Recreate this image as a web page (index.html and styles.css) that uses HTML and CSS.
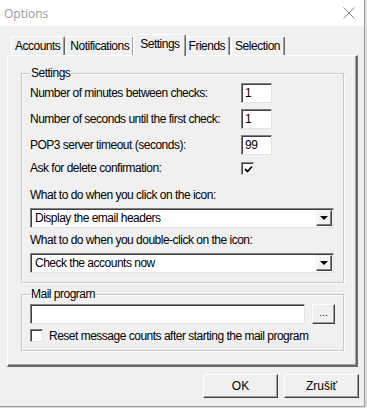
FILE: index.html
```html
<!DOCTYPE html>
<html lang="en">
<head>
    <meta charset="UTF-8">
    <title>Options</title>
    <link rel="stylesheet" href="styles.css">
</head>
<body>
    <div class="window">
        <div class="titlebar">
            <span class="title">Options</span>
            <svg class="close-x" width="12" height="12" viewBox="0 0 12 12">
                <path d="M0.5 0.5 L11.5 11.5 M11.5 0.5 L0.5 11.5" stroke="#8a8a8a" stroke-width="1" fill="none"/>
            </svg>
        </div>

        <div class="content">
            <div class="tabs">
                <div class="tab">Accounts</div>
                <div class="tab">Notifications</div>
                <div class="tab active">Settings</div>
                <div class="tab">Friends</div>
                <div class="tab">Selection</div>
            </div>

            <div class="panel">
                <fieldset class="group settings">
                    <legend>Settings</legend>
                    <div class="grid">
                        <label>Number of minutes between checks:</label>
                        <div class="field">1</div>
                        <label>Number of seconds until the first check:</label>
                        <div class="field">1</div>
                        <label>POP3 server timeout (seconds):</label>
                        <div class="field">99</div>
                        <label class="short">Ask for delete confirmation:</label>
                        <div class="check checked">
                            <svg width="9" height="9" viewBox="0 0 9 9">
                                <path d="M1 4 L3.5 6.5 L8 1.5" stroke="#000" stroke-width="1.8" fill="none"/>
                            </svg>
                        </div>
                    </div>

                    <div class="caption">What to do when you click on the icon:</div>
                    <div class="combo">
                        <span>Display the email headers</span>
                        <div class="arrow"><i></i></div>
                    </div>

                    <div class="caption">What to do when you double-click on the icon:</div>
                    <div class="combo">
                        <span>Check the accounts now</span>
                        <div class="arrow"><i></i></div>
                    </div>
                </fieldset>

                <fieldset class="group mail">
                    <legend>Mail program</legend>
                    <div class="path-row">
                        <div class="field wide"></div>
                        <button class="browse">...</button>
                    </div>
                    <div class="check-row">
                        <div class="check"></div>
                        <span>Reset message counts after starting the mail program</span>
                    </div>
                </fieldset>
            </div>

            <div class="buttons">
                <button class="btn">OK</button>
                <button class="btn">Zrušiť</button>
            </div>
        </div>
    </div>
</body>
</html>
```

FILE: styles.css
```css
body {
    margin: 0;
    padding: 0;
    background: #d9dde3;
    font-family: "Liberation Sans", Arial, sans-serif;
    font-size: 12px;
    letter-spacing: -0.5px;
    color: #000;
    white-space: nowrap;
}

.window {
    width: 364px;
    height: 406px;
    border-right: 1px solid #9a9a9a;
    border-bottom: 1px solid #9a9a9a;
    background: #f0f0f0;
    display: flex;
    flex-direction: column;
}

.titlebar {
    height: 26px;
    background: #fff;
    display: flex;
    align-items: center;
    justify-content: space-between;
    padding: 0 9px 0 4px;
    letter-spacing: 0;
}

.title {
    font-family: "Open Sans", "Liberation Sans", sans-serif;
    font-size: 12px;
    color: #999;
}

.content {
    padding: 8px 0 0 7px;
}

/* tab strip */
.tabs {
    display: flex;
    align-items: flex-end;
    padding-left: 4px;
    height: 21px;
}

.tab {
    height: 18px;
    line-height: 18px;
    padding: 0 4px 0 3px;
    border-top: 1px solid #fff;
    border-left: 1px solid #fff;
    border-right: 1px solid #696969;
    box-shadow: inset -1px 0 #a0a0a0;
    border-radius: 2px 2px 0 0;
    margin-right: 1px;
}

.tab.active {
    height: 21px;
    line-height: 18px;
    padding: 0 5px 0 6px;
    margin: 0 -1px -1px -2px;
    background: #f0f0f0;
    position: relative;
    z-index: 1;
}

.panel {
    width: 335px;
    height: 299px;
    border-top: 1px solid #fff;
    border-left: 1px solid #fff;
    border-right: 2px solid #696969;
    border-bottom: 2px solid #696969;
    box-shadow: inset -1px -1px #a0a0a0;
    padding: 10px 0 0 13px;
}

/* group boxes */
.group {
    margin: 0;
    width: 323px;
    box-sizing: border-box;
    border: 1px solid #c8c8c8;
    box-shadow: 1px 1px #fff, inset 1px 1px #fff;
    padding: 2px 8px 9px 8px;
    min-width: 0;
}

.group legend {
    padding: 0 1px;
    margin-left: 0;
    line-height: 15px;
}

.group.mail {
    margin-top: 4px;
    padding-bottom: 7px;
}

.grid {
    display: grid;
    grid-template-columns: 211px 31px;
    grid-auto-rows: 20px;
    row-gap: 6px;
    align-items: center;
}

.grid label.short {
    align-self: start;
    line-height: 14px;
}

.field {
    height: 20px;
    box-sizing: border-box;
    background: #fff;
    border-top: 1px solid #808080;
    border-left: 1px solid #808080;
    border-right: 1px solid #e3e3e3;
    border-bottom: 1px solid #e3e3e3;
    box-shadow: inset 1px 1px #404040;
    padding: 1px 3px;
    line-height: 17px;
}

.check {
    width: 13px;
    height: 13px;
    box-sizing: border-box;
    background: #fff;
    border-top: 1px solid #808080;
    border-left: 1px solid #808080;
    border-right: 1px solid #e3e3e3;
    border-bottom: 1px solid #e3e3e3;
    box-shadow: inset 1px 1px #404040;
    display: flex;
    align-items: center;
    justify-content: center;
    align-self: start;
    margin-top: 1px;
}

.check svg {
    margin: 1px 0 0 1px;
}

.caption {
    margin-top: 7px;
    line-height: 15px;
}

.combo {
    margin-top: 5px;
    height: 20px;
    box-sizing: border-box;
    background: #fff;
    border-top: 1px solid #808080;
    border-left: 1px solid #808080;
    border-right: 1px solid #e3e3e3;
    border-bottom: 1px solid #e3e3e3;
    box-shadow: inset 1px 1px #404040;
    display: flex;
    align-items: center;
    justify-content: space-between;
    padding: 0 1px 0 4px;
    width: 304px;
}

.caption + .combo + .caption {
    margin-top: 5px;
}

.arrow {
    width: 16px;
    height: 16px;
    box-sizing: border-box;
    background: #f0f0f0;
    border-top: 1px solid #f0f0f0;
    border-left: 1px solid #f0f0f0;
    border-right: 1px solid #404040;
    border-bottom: 1px solid #404040;
    box-shadow: inset -1px -1px #808080, inset 1px 1px #fff;
    display: flex;
    align-items: center;
    justify-content: center;
}

.arrow i {
    width: 0;
    height: 0;
    border-left: 4px solid transparent;
    border-right: 4px solid transparent;
    border-top: 4px solid #000;
}

.path-row {
    display: flex;
    align-items: center;
    gap: 7px;
}

.field.wide {
    width: 277px;
}

.browse {
    width: 23px;
    height: 20px;
    padding: 0 0 4px;
    font: inherit;
    font-size: 11px;
    color: #333;
    background: #f0f0f0;
    border-top: 1px solid #fff;
    border-left: 1px solid #fff;
    border-right: 1px solid #404040;
    border-bottom: 1px solid #404040;
    box-shadow: inset -1px -1px #a0a0a0;
}

.check-row {
    margin-top: 5px;
    display: flex;
    align-items: center;
    gap: 6px;
    line-height: 14px;
}

.check-row .check {
    margin-top: 0;
}

.buttons {
    display: flex;
    justify-content: flex-end;
    gap: 6px;
    padding-right: 5px;
    margin-top: 7px;
}

.btn {
    width: 75px;
    height: 24px;
    font: inherit;
    background: #f0f0f0;
    border-top: 1px solid #fff;
    border-left: 1px solid #fff;
    border-right: 1px solid #404040;
    border-bottom: 1px solid #404040;
    box-shadow: inset -1px -1px #a0a0a0;
    padding: 0;
}
```
